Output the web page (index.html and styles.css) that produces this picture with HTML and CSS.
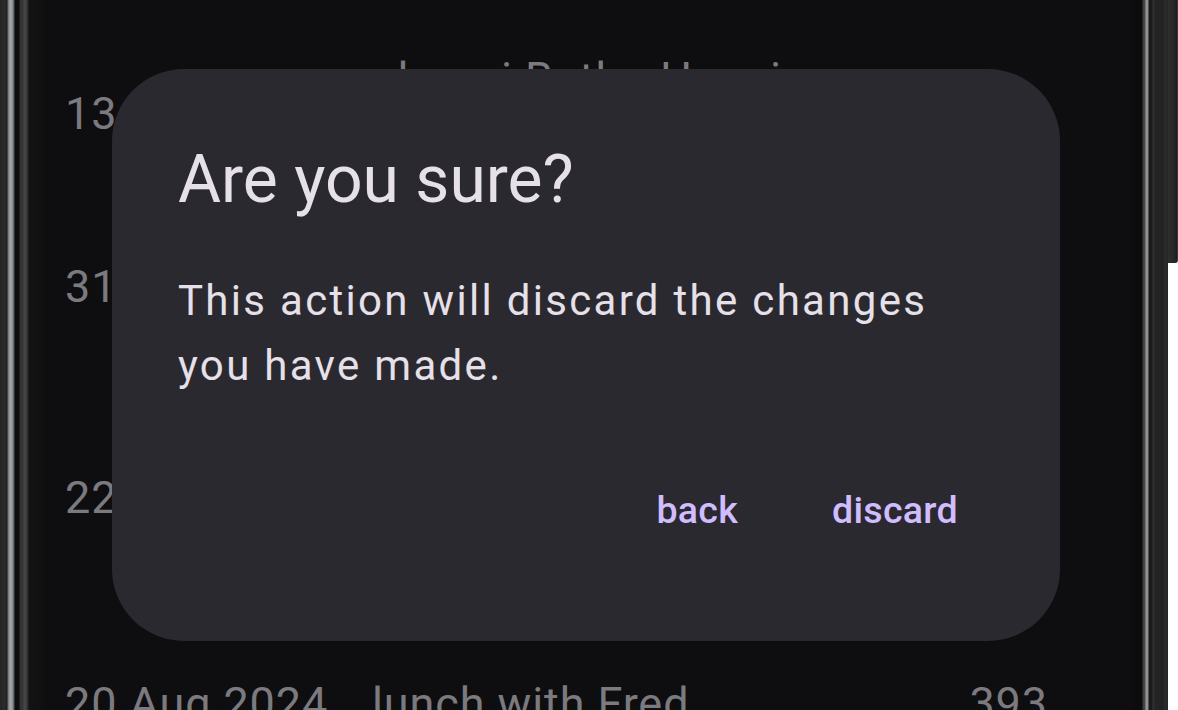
FILE: index.html
```html
<!DOCTYPE html>
<html lang="en">
<head>
<meta charset="utf-8">
<title>Are you sure?</title>
<link rel="stylesheet" href="styles.css">
</head>
<body>
<div class="device">
  <div class="bezel-left"></div>
  <main class="screen">
    <ul class="list">
      <li class="row row-first">
        <span class="date">13 Aug 2024</span>
        <span class="desc">alumni Butler Hospice<br>dinner</span>
        <span class="amt">127</span>
      </li>
      <li class="row">
        <span class="date">31 Jul 2024</span>
        <span class="desc">groceries for the<br>weekend</span>
        <span class="amt">85</span>
      </li>
      <li class="row">
        <span class="date">22 Jul 2024</span>
        <span class="desc">train tickets to<br>the coast and<br>back</span>
        <span class="amt">214</span>
      </li>
      <li class="row row-last">
        <span class="date">20 Aug 2024</span>
        <span class="desc">lunch with Fred</span>
        <span class="amt">393</span>
      </li>
    </ul>
    <div class="scrim">
      <section class="dialog" role="alertdialog" aria-labelledby="dlg-title">
        <h1 class="dialog-title" id="dlg-title">Are you sure?</h1>
        <p class="dialog-text">This action will discard the changes you have made.</p>
        <div class="dialog-actions">
          <button class="text-btn" type="button">back</button>
          <button class="text-btn" type="button">discard</button>
        </div>
      </section>
    </div>
  </main>
  <div class="bezel-right"></div>
  <div class="edge"><div class="side-key"></div></div>
</div>
</body>
</html>
```

FILE: styles.css
```css
* { box-sizing: border-box; }

html, body {
  margin: 0;
  padding: 0;
  width: 1178px;
  height: 710px;
  overflow: hidden;
  background: #ffffff;
  font-family: Roboto, "Noto Sans", "Liberation Sans", sans-serif;
}

.device {
  display: flex;
  width: 1178px;
  height: 710px;
}

.bezel-left {
  width: 45px;
  flex: none;
  background: linear-gradient(to right,
    #242424 0px, #2c2c2c 5px, #1c1c1c 7px,
    #6e7276 8px, #a2a6aa 10px, #9a9ea2 12px, #54585c 14px,
    #0c0c0c 15px, #0e0e0e 19px,
    #303030 20px, #383838 23px, #4a4a4a 25px, #2a2a2a 28px,
    #131313 29px, #111112 40px, #0f0f11 45px);
}

.screen {
  position: relative;
  flex: none;
  width: 1085px;
  height: 710px;
  background: #0e0e10;
  overflow: hidden;
}

.bezel-right {
  width: 38px;
  flex: none;
  background: linear-gradient(to right,
    #0e0c0c 0px, #0c0b0b 12px,
    #3c3c3c 13px, #4a4a4a 15px, #9a9a9a 16px, #8c8c8c 18px,
    #1a1a1a 19px, #1c1c1c 22px, #343434 23px,
    #242424 25px, #222222 33px, #2c2c2c 35px, #262626 38px);
}

.edge {
  width: 10px;
  flex: none;
  background: #ffffff;
}

.side-key {
  height: 263px;
  background: linear-gradient(to right, #2e2e2e, #262626 70%, #1c1c1c);
  border-bottom-right-radius: 3px;
  border-right: 1px solid #3a3a3a;
}

/* list behind the dialog */
.list {
  list-style: none;
  margin: 0;
  padding: 23px 82px 0 20px;
  color: #7b7a7e;
  font-size: 45px;
  line-height: 70px;
  letter-spacing: 0.02em;
}

.row {
  display: flex;
  align-items: center;
  padding: 18px 0;
}

.row-first {
  padding: 21px 0 15px;
}

.row-last {
  padding-top: 48px;
}

.date {
  width: 307px;
  flex: none;
  white-space: nowrap;
}

.desc {
  flex: 1;
}

.amt {
  flex: none;
  text-align: right;
}

/* dialog */
.scrim {
  position: absolute;
  inset: 0;
}

.dialog {
  position: absolute;
  left: 67px;
  top: 69px;
  width: 948px;
  height: 572px;
  display: flex;
  flex-direction: column;
  padding: 68px 66px 83px 66px;
  background: #2b2930;
  border-radius: 72px;
}

.dialog-title {
  margin: 0 0 45px 0;
  font-size: 66px;
  line-height: 86px;
  font-weight: 400;
  color: #e6e0e9;
}

.dialog-text {
  margin: 0;
  max-width: 800px;
  font-size: 42px;
  line-height: 65px;
  letter-spacing: 0.055em;
  color: #e6e0e9;
}

.dialog-actions {
  display: flex;
  justify-content: flex-end;
  gap: 22px;
  margin-top: 60px;
}

.text-btn {
  height: 100px;
  padding: 0 36px;
  border: none;
  background: transparent;
  font-family: Roboto, "Noto Sans", "Liberation Sans", sans-serif;
  font-size: 37.6px;
  line-height: 104px;
  font-weight: 500;
  letter-spacing: 0.007em;
  color: #d0bcff;
  border-radius: 50px;
}
```
